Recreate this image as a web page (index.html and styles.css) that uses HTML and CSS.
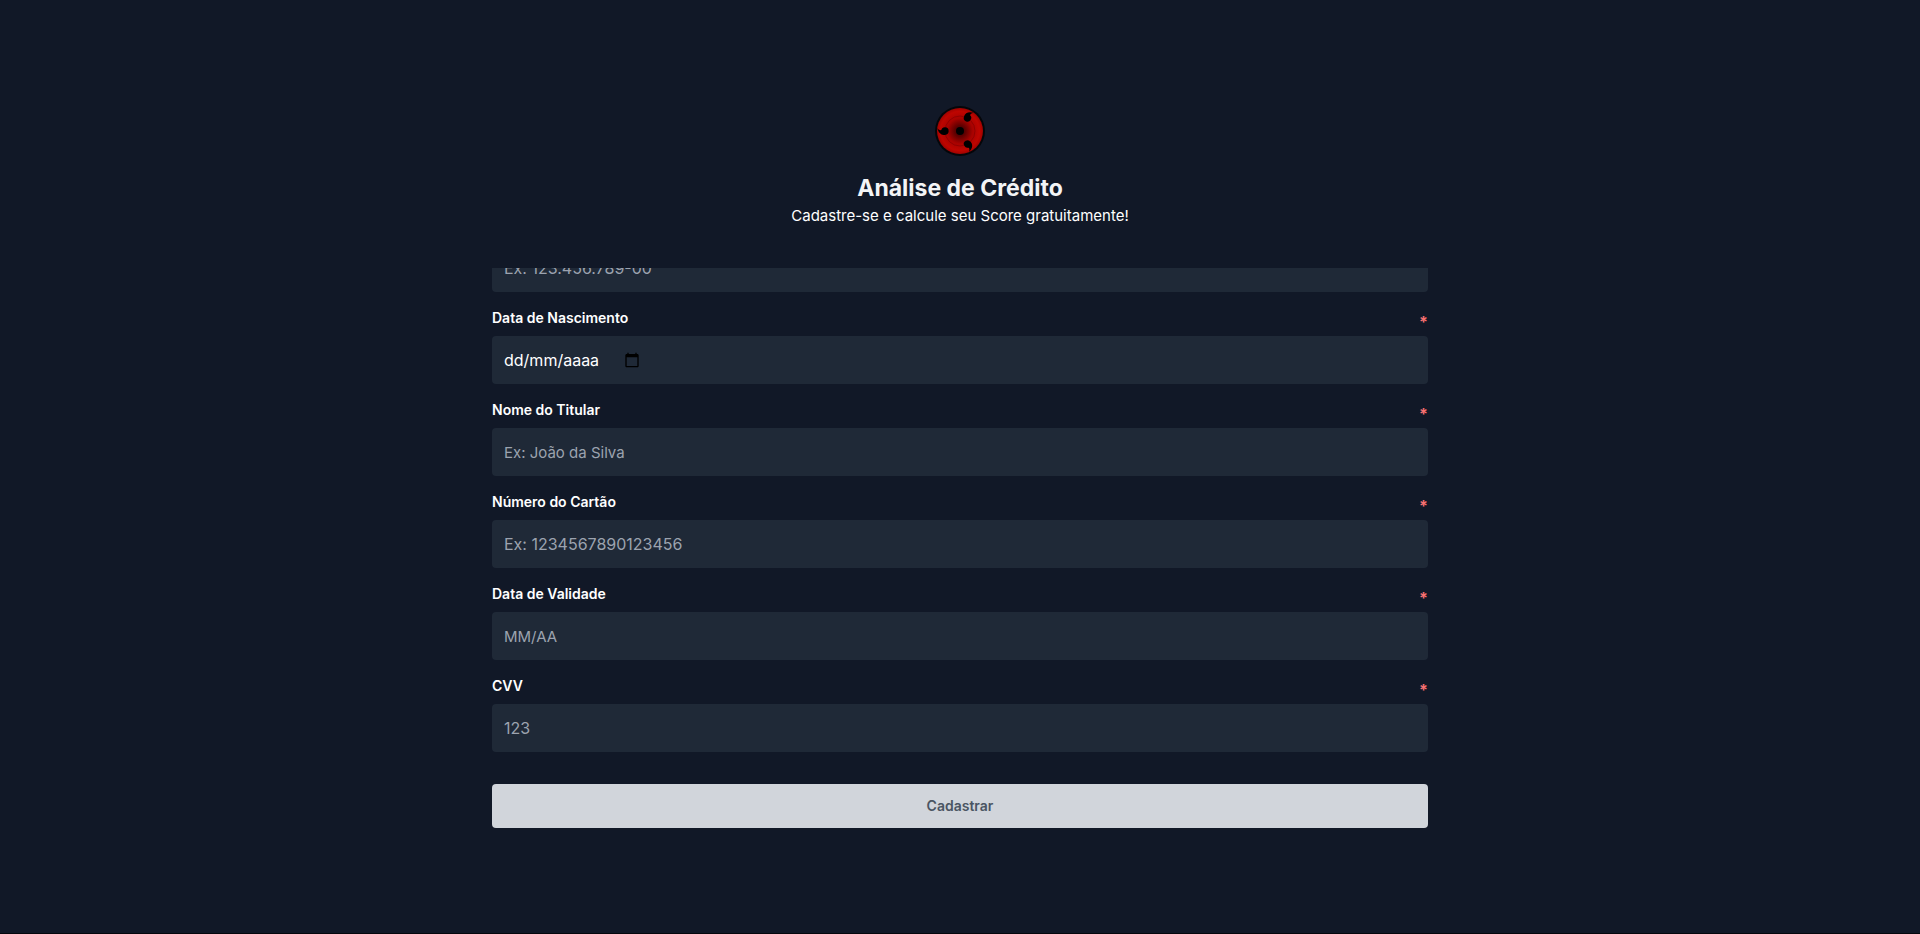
FILE: index.html
```html
<!DOCTYPE html>
<html lang="pt-BR">
<head>
<meta charset="utf-8">
<meta name="viewport" content="width=device-width, initial-scale=1">
<title>Análise de Crédito</title>
<link rel="stylesheet" href="styles.css">
</head>
<body>
<main class="page">
  <header class="header">
    <svg class="logo" viewBox="0 0 150 150" aria-hidden="true">
      <defs>
        <radialGradient id="iris">
          <stop offset="0" stop-color="#3c0000"/>
          <stop offset="0.22" stop-color="#5c0000"/>
          <stop offset="0.55" stop-color="#a80200"/>
          <stop offset="0.85" stop-color="#be0500"/>
          <stop offset="1" stop-color="#a00200"/>
        </radialGradient>
        <g id="tomoe">
          <circle cx="30" cy="75" r="11"/>
          <path d="M32 86C19 89 11 82 7 67C12 73 17 75 24 70Z"/>
        </g>
      </defs>
      <circle cx="75" cy="75" r="75" fill="#05060a"/>
      <circle cx="75" cy="75" r="69" fill="url(#iris)"/>
      <circle cx="75" cy="75" r="45" fill="none" stroke="#800000" stroke-width="2"/>
      <circle cx="75" cy="75" r="12"/>
      <use href="#tomoe"/>
      <use href="#tomoe" transform="rotate(120 75 75)"/>
      <use href="#tomoe" transform="rotate(240 75 75)"/>
    </svg>
    <h1 class="title">Análise de Crédito</h1>
    <p class="subtitle">Cadastre-se e calcule seu Score gratuitamente!</p>
  </header>
  <form class="form">
    <div class="scroller">
      <div class="fields">
        <div class="field">
          <label class="label" for="cpf">CPF <span class="required">*</span></label>
          <input class="control numeric" id="cpf" type="text" placeholder="Ex: 123.456.789-00">
        </div>
        <div class="field">
          <label class="label" for="nascimento">Data de Nascimento <span class="required">*</span></label>
          <div class="control numeric date">
            <input class="date-input" id="nascimento" type="text" placeholder="dd/mm/aaaa">
            <button class="date-button" type="button" aria-label="Abrir calendário">
              <svg class="date-icon" viewBox="0 0 24 24"><path d="M20 3h-1V1h-2v2H7V1H5v2H4c-1.1 0-2 .9-2 2v16c0 1.1.9 2 2 2h16c1.1 0 2-.9 2-2V5c0-1.1-.9-2-2-2zm0 18H4V8h16v13z"/></svg>
            </button>
          </div>
        </div>
        <div class="field">
          <label class="label" for="titular">Nome do Titular <span class="required">*</span></label>
          <input class="control" id="titular" type="text" placeholder="Ex: João da Silva">
        </div>
        <div class="field">
          <label class="label" for="cartao">Número do Cartão <span class="required">*</span></label>
          <input class="control numeric" id="cartao" type="text" placeholder="Ex: 1234567890123456">
        </div>
        <div class="field">
          <label class="label" for="validade">Data de Validade <span class="required">*</span></label>
          <input class="control" id="validade" type="text" placeholder="MM/AA">
        </div>
        <div class="field">
          <label class="label" for="cvv">CVV <span class="required">*</span></label>
          <input class="control numeric" id="cvv" type="text" placeholder="123">
        </div>
      </div>
    </div>
    <button class="submit" type="submit">Cadastrar</button>
  </form>
</main>
</body>
</html>
```
FILE: styles.css
```css
* {
  box-sizing: border-box;
  margin: 0;
  padding: 0;
}

body {
  background: #111827;
  color: #f3f4f6;
  font-family: Inter, "Noto Sans", sans-serif;
  font-size: 15px;
  line-height: 24px;
}

.page {
  display: flex;
  flex-direction: column;
  align-items: center;
  justify-content: center;
  gap: 40px;
  min-height: 100vh;
  padding: 0 24px;
  box-shadow: inset 0 -1px #05070d;
}

.header {
  display: flex;
  flex-direction: column;
  align-items: center;
  text-align: center;
}

.logo {
  width: 50px;
  height: 50px;
  margin-bottom: 16px;
}

.title {
  font-size: 23px;
  font-weight: 700;
  line-height: 32px;
}

.subtitle {
  color: #ffffff;
}

.form {
  display: flex;
  flex-direction: column;
  gap: 32px;
  width: 100%;
  max-width: 936px;
}

/* Reversed so that the list opens at its last field. */
.scroller {
  display: flex;
  flex-direction: column-reverse;
  max-height: calc(100vh - 450px);
  overflow-y: auto;
  scrollbar-width: none;
}

.fields {
  display: flex;
  flex-direction: column;
  gap: 16px;
}

.field {
  display: flex;
  flex-direction: column;
  gap: 8px;
}

.label {
  display: flex;
  justify-content: space-between;
  align-items: flex-end;
  color: #ffffff;
  font-size: 14px;
  font-weight: 600;
  line-height: 20px;
}

.required {
  color: #f87171;
  font-size: 16px;
  font-weight: 700;
  line-height: 12px;
}

.control {
  width: 100%;
  height: 48px;
  padding: 0 12px;
  border: 0;
  border-radius: 4px;
  background: #1f2937;
  color: #ffffff;
  font: inherit;
}

.control::placeholder {
  color: #9ca3af;
  opacity: 1;
}

.numeric {
  font-size: 16px;
}

.date {
  display: flex;
  align-items: center;
}

.date-input {
  width: 120px;
  border: 0;
  background: transparent;
  color: #ffffff;
  font: inherit;
}

.date-input::placeholder {
  color: #ffffff;
  opacity: 1;
}

.date-button {
  display: flex;
  border: 0;
  background: transparent;
}

.date-icon {
  width: 16px;
  height: 16px;
}

.submit {
  height: 44px;
  border: 0;
  border-radius: 4px;
  background: #d1d5db;
  color: #4b5563;
  font: inherit;
  font-size: 14px;
  font-weight: 600;
}
```
